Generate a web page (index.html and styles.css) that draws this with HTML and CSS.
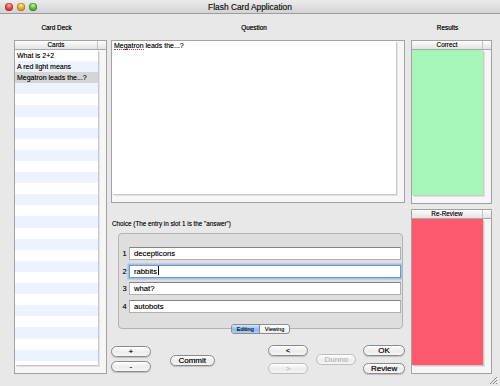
FILE: index.html
```html
<!DOCTYPE html>
<html lang="en">
<head>
    <meta charset="UTF-8">
    <title>Flash Card Application</title>
    <link rel="stylesheet" href="styles.css">
</head>
<body>
    <div class="window">
        <div class="titlebar">
            <div class="lights">
                <span class="light close"></span>
                <span class="light minimize"></span>
                <span class="light zoom"></span>
            </div>
            <div class="title">Flash Card Application</div>
            <div></div>
        </div>

        <div class="content">
            <!-- Card deck -->
            <div class="col col-deck">
                <div class="col-label">Card Deck</div>
                <div class="pane pane-deck">
                    <div class="pane-head"><div class="head-title">Cards</div><div class="head-corner"></div></div>
                    <div class="pane-body">
                        <ul class="pane-view card-list">
                            <li>What is 2+2</li>
                            <li>A red light means</li>
                            <li class="selected">Megatron leads the...?</li>
                        </ul>
                    </div>
                </div>
            </div>

            <!-- Question and choices -->
            <div class="col col-question">
                <div class="col-label">Question</div>
                <div class="pane pane-question">
                    <div class="pane-body">
                        <div class="pane-view question-text"><span class="misspelled">Megatron</span> leads the...?</div>
                    </div>
                </div>

                <div class="choice-label">Choice (The entry in slot 1 is the "answer")</div>
                <div class="choice-box">
                    <div class="choice-rows">
                        <div class="choice-row"><span class="num">1</span><div class="field">decepticons</div></div>
                        <div class="choice-row"><span class="num">2</span><div class="field focused">rabbits<span class="caret"></span></div></div>
                        <div class="choice-row"><span class="num">3</span><div class="field">what?</div></div>
                        <div class="choice-row"><span class="num">4</span><div class="field">autobots</div></div>
                    </div>
                    <div class="segmented">
                        <span class="segment active">Editing</span>
                        <span class="segment">Viewing</span>
                    </div>
                </div>

                <div class="actions">
                    <div class="btn-stack stack-edit">
                        <button class="btn">+</button>
                        <button class="btn">-</button>
                    </div>
                    <div class="btn-stack stack-commit">
                        <button class="btn">Commit</button>
                    </div>
                    <div class="btn-stack stack-nav">
                        <button class="btn">&lt;</button>
                        <button class="btn" disabled>&gt;</button>
                    </div>
                    <div class="btn-stack stack-dunno">
                        <button class="btn" disabled>Dunno</button>
                    </div>
                    <div class="btn-stack stack-answer">
                        <button class="btn">OK</button>
                        <button class="btn">Review</button>
                    </div>
                </div>
            </div>

            <!-- Results -->
            <div class="col col-results">
                <div class="col-label">Results</div>
                <div class="pane pane-correct">
                    <div class="pane-head"><div class="head-title">Correct</div><div class="head-corner"></div></div>
                    <div class="pane-body">
                        <div class="pane-view result-correct"></div>
                    </div>
                </div>
                <div class="pane pane-review">
                    <div class="pane-head"><div class="head-title">Re-Review</div><div class="head-corner"></div></div>
                    <div class="pane-body">
                        <div class="pane-view result-review"></div>
                    </div>
                </div>
            </div>
        </div>

        <svg class="grip" width="10" height="10" viewBox="0 0 10 10">
            <path d="M9 2 L2 9 M9 5 L5 9 M9 8 L8 9" stroke="#8a8a8a" stroke-width="1"/>
        </svg>
    </div>
</body>
</html>
```

FILE: styles.css
```css
body {
    margin: 0;
    font-family: "Liberation Sans", Arial, sans-serif;
    color: #111;
    text-shadow: 0 0 0.3px rgba(0, 0, 0, 0.6);
}

.window {
    position: relative;
    width: 500px;
    height: 386px;
    background: #e8e8e8;
    overflow: hidden;
}

/* Title bar */
.titlebar {
    display: grid;
    grid-template-columns: 1fr auto 1fr;
    align-items: center;
    height: 13px;
    background: linear-gradient(#ececec, #d3d3d3);
    border-bottom: 1px solid #9d9d9d;
}

.lights {
    display: flex;
    gap: 4px;
    padding-left: 5px;
}

.light {
    width: 8px;
    height: 8px;
    border-radius: 50%;
    box-shadow: inset 0 0 0 0.5px rgba(0, 0, 0, 0.35);
}

.light.close {
    background: radial-gradient(circle at 50% 30%, #ffb3a8 0, #e6463c 45%, #b8221b 100%);
}

.light.minimize {
    background: radial-gradient(circle at 50% 30%, #ffe6a0 0, #f1a62a 45%, #c27a10 100%);
}

.light.zoom {
    background: radial-gradient(circle at 50% 30%, #c8f5a8 0, #5dbb3c 45%, #2f8a1c 100%);
}

.title {
    font-size: 8.4px;
    color: #222;
}

/* Columns */
.content {
    display: flex;
    padding-left: 14px;
}

.col {
    display: flex;
    flex-direction: column;
}

.col-deck {
    width: 93px;
}

.col-question {
    width: 294px;
    margin-left: 4px;
}

.col-results {
    width: 81px;
    margin-left: 6px;
}

.col-label {
    height: 26px;
    display: flex;
    align-items: center;
    justify-content: center;
    padding-right: 8px;
    font-size: 6.4px;
    color: #222;
    text-shadow: 0 0 0.5px #222;
}

/* Scroll panes */
.pane {
    display: flex;
    flex-direction: column;
    box-sizing: border-box;
    border: 1px solid #a2a2a2;
    background: #f6f6f6;
}

.pane-head {
    display: flex;
    height: 8px;
    border-bottom: 1px solid #a9a9a9;
    background: linear-gradient(#fdfdfd, #e3e3e3);
    font-size: 6.4px;
    line-height: 8px;
}

.head-title {
    flex: 1;
    text-align: center;
}

.head-corner {
    width: 8px;
    border-left: 1px solid #c2c2c2;
}

.pane-body {
    flex: 1;
    min-height: 0;
    padding: 0 8px 8px 0;
}

.pane-view {
    height: 100%;
    box-sizing: border-box;
    box-shadow: 1px 1px 0 #c9c9c9, 2px 2px 0 #e2e2e2;
}

.pane-deck {
    height: 334px;
}

.pane-question {
    height: 163px;
}

.pane-correct {
    height: 164px;
}

.pane-review {
    height: 165px;
    margin-top: 5px;
}

/* Card list */
.card-list {
    list-style: none;
    margin: 0;
    padding: 0;
    background: repeating-linear-gradient(#fff 0, #fff 11.1px, #edf3fe 11.1px, #edf3fe 22.2px);
}

.card-list li {
    height: 11.1px;
    line-height: 11.1px;
    padding-left: 2px;
    font-size: 7px;
    white-space: nowrap;
}

.card-list li.selected {
    background: #d5d5d5;
}

/* Question */
.question-text {
    background: #fff;
    padding: 0 2px;
    font-size: 7px;
    line-height: 9px;
}

.misspelled {
    display: inline-block;
    line-height: 7px;
    border-bottom: 1px dotted #e8303a;
}

.choice-label {
    margin-top: 17px;
    height: 8px;
    line-height: 8px;
    padding-left: 1px;
    font-size: 6.3px;
}

.choice-box {
    display: flex;
    flex-direction: column;
    margin: 5px 2px 0 7px;
    padding: 13px 1px 0 1px;
    border: 1px solid #b3b3b3;
    border-radius: 4px;
    background: #dedede;
}

.choice-rows {
    display: flex;
    flex-direction: column;
    gap: 4.6px;
}

.choice-row {
    display: flex;
    align-items: center;
    height: 13px;
}

.num {
    width: 9px;
    text-align: center;
    font-size: 7.5px;
}

.field {
    flex: 1;
    height: 13px;
    box-sizing: border-box;
    border: 1px solid #b0b0b0;
    border-top-color: #828282;
    background: #fff;
    padding-left: 4px;
    font-size: 7.7px;
    line-height: 11px;
}

.field.focused {
    border-color: #7596c4;
    box-shadow: 0 0 0 1.5px #9fc0e8;
}

.caret {
    display: inline-block;
    width: 1px;
    height: 9px;
    margin-left: 0.5px;
    background: #000;
    vertical-align: -1px;
}

.segmented {
    align-self: center;
    display: flex;
    height: 10px;
    box-sizing: border-box;
    margin: 11px 0 -6px;
    border: 1px solid #8d8d8d;
    border-radius: 3px;
    background: linear-gradient(#ffffff, #ececec);
    overflow: hidden;
    font-size: 5.6px;
    line-height: 8px;
}

.segment {
    padding: 0 5px;
}

.segment.active {
    background: linear-gradient(#d4e6fc, #8ebaf0 55%, #a9cdf7);
    border-right: 1px solid #7d8fa8;
}

/* Buttons */
.actions {
    display: flex;
    align-items: center;
    height: 33px;
    margin-top: 14px;
}

.btn-stack {
    display: flex;
    flex-direction: column;
    gap: 7px;
}

.stack-edit {
    width: 40px;
    gap: 4px;
}

.stack-commit {
    width: 45px;
    margin-left: 19px;
    margin-top: 2px;
}

.stack-nav {
    width: 41px;
    margin-left: 53px;
}

.stack-dunno {
    width: 40px;
    margin-left: 8px;
}

.stack-answer {
    width: 42px;
    margin-left: 7px;
}

.btn {
    height: 11px;
    margin: 0;
    padding: 0;
    border: 1px solid #8a8a8a;
    border-radius: 6px;
    background: linear-gradient(#ffffff, #ececec 55%, #f6f6f6);
    box-shadow: 0 1px 1px rgba(0, 0, 0, 0.18);
    font-family: "Liberation Sans", Arial, sans-serif;
    font-size: 8px;
    line-height: 9px;
    color: #111;
    text-shadow: 0 0 0.4px rgba(0, 0, 0, 0.7);
}

.btn:disabled {
    border-color: #bdbdbd;
    color: #a8a8a8;
    box-shadow: none;
    text-shadow: none;
}

/* Results */
.result-correct {
    background: #a6f6b8;
}

.result-review {
    background: #fc5a6c;
}

.grip {
    position: absolute;
    right: 2px;
    bottom: 1px;
}
```
